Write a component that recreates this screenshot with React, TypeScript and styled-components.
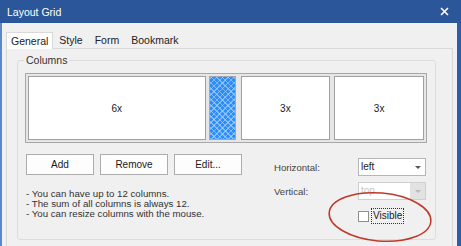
import styled, { createGlobalStyle, css } from "styled-components";

const GlobalStyle = createGlobalStyle`
  html, body {
    margin: 0;
    padding: 0;
    background: #f0f0f0;
  }
  body {
    font-family: "Liberation Sans", Arial, sans-serif;
    color: #1a1a1a;
  }
`;

const Window = styled.div`
  position: relative;
  width: 461px;
  height: 246px;
  display: flex;
  flex-direction: column;
  overflow: hidden;
`;

const TitleBar = styled.div`
  height: 23px;
  flex: none;
  background: #2b579a;
  color: #fff;
  display: flex;
  align-items: center;
  justify-content: space-between;
  padding: 0 12px 0 7px;
  font-size: 10.5px;
`;

const CloseIcon = styled.svg`
  width: 9px;
  height: 9px;
`;

const Body = styled.div`
  flex: 1;
  min-height: 0;
  background: #f0f0f0;
  border-left: 2px solid #5a88cc;
  border-right: 4px solid #2b5fac;
  padding: 9px 4px 0 4px;
`;

const TabStrip = styled.div`
  display: flex;
  align-items: flex-end;
  height: 16px;
  position: relative;
  z-index: 1;
`;

const Tab = styled.div<{ $active?: boolean }>`
  box-sizing: border-box;
  height: 14px;
  padding: 0 6px;
  font-size: 10.5px;
  line-height: 13px;
  color: #222;
  ${(p) =>
    p.$active &&
    css`
      height: 17px;
      margin-bottom: -1px;
      padding: 1px 4px 0;
      background: #fff;
      border: 1px solid #d9d9d9;
      border-bottom: none;
      line-height: 14px;
    `}
`;

const Panel = styled.div`
  border: 1px solid #d9d9d9;
  background: #f0f0f0;
  padding: 5px 16px 30px 10px;
`;

const Group = styled.fieldset`
  margin: 0;
  padding: 0 8px 15px 7px;
  border: 1px solid #dcdcdc;
  border-radius: 3px;
  min-width: 0;
`;

const Legend = styled.legend`
  padding: 0 2px;
  margin-left: -1px;
  font-size: 10.5px;
  line-height: 12px;
  color: #333;
`;

const Strip = styled.div`
  margin-top: 7px;
  display: flex;
  height: 64px;
  padding: 2px;
  border: 1px solid #a9a9a9;
  background: #e6e6e6;
`;

const Cell = styled.div<{ $span: number }>`
  flex: ${(p) => p.$span} 1 0;
  min-width: 0;
  box-sizing: border-box;
  background: #fff;
  border: 1px solid #a0a0a0;
  display: flex;
  align-items: center;
  justify-content: center;
  font-size: 10px;
  & + & {
    margin-left: 4px;
  }
`;

const Splitter = styled.div`
  flex: none;
  width: 27px;
  margin: 0 5px 0 3px;
  box-sizing: border-box;
  border: 1px solid #9aa8b8;
  background-color: #2e8ef8;
  background-image: repeating-linear-gradient(
      45deg,
      rgba(190, 220, 255, 0.55) 0 1px,
      transparent 1px 4px
    ),
    repeating-linear-gradient(
      -45deg,
      rgba(190, 220, 255, 0.55) 0 1px,
      transparent 1px 4px
    );
`;

const Lower = styled.div`
  display: grid;
  grid-template-columns: 249px 1fr;
  margin-top: 11px;
`;

const LeftCol = styled.div`
  padding-left: 1px;
`;

const ButtonRow = styled.div`
  display: flex;
  gap: 6px;
`;

const Button = styled.button`
  width: 68px;
  height: 21px;
  padding: 0;
  background: #fdfdfd;
  border: 1px solid #adadad;
  font-family: inherit;
  font-size: 10px;
  color: #1a1a1a;
`;

const Notes = styled.div`
  margin-top: 14px;
  font-size: 9.7px;
  line-height: 10px;
  color: #333;
`;

const Fields = styled.div`
  margin-top: 4px;
  display: grid;
  grid-template-columns: 84px 68px;
  grid-auto-rows: 18px;
  row-gap: 6px;
  align-items: center;
  font-size: 9.6px;
  color: #444;
`;

const Combo = styled.div<{ $disabled?: boolean }>`
  box-sizing: border-box;
  height: 18px;
  display: flex;
  align-items: stretch;
  background: #fff;
  border: 1px solid ${(p) => (p.$disabled ? "#cfcfcf" : "#b5b5b5")};
  color: ${(p) => (p.$disabled ? "#c6c6c6" : "#1a1a1a")};
  font-size: 10px;
`;

const ComboText = styled.span`
  flex: 1;
  padding-left: 2px;
  line-height: 16px;
`;

const ComboArrow = styled.span<{ $disabled?: boolean }>`
  width: 15px;
  display: flex;
  align-items: center;
  justify-content: center;
  background: ${(p) => (p.$disabled ? "#e2e2e2" : "transparent")};
  &::after {
    content: "";
    border-left: 3px solid transparent;
    border-right: 3px solid transparent;
    border-top: 3px solid ${(p) => (p.$disabled ? "#b8b8b8" : "#555")};
  }
`;

const CheckRow = styled.div`
  grid-column: 2;
  display: flex;
  align-items: center;
  gap: 2px;
  margin-top: 2px;
`;

const Box = styled.span`
  width: 11px;
  height: 11px;
  box-sizing: border-box;
  background: #fff;
  border: 1px solid #8f8f8f;
`;

const CheckLabel = styled.span`
  padding: 1px 1px 2px;
  border: 1px dotted #333;
  font-size: 10px;
  color: #222;
`;

const Mark = styled.svg`
  position: absolute;
  left: 326px;
  top: 190px;
  width: 108px;
  height: 54px;
  pointer-events: none;
`;

export default function App() {
  return (
    <>
      <GlobalStyle />
      <Window>
        <TitleBar>
          <span>Layout Grid</span>
          <CloseIcon viewBox="0 0 9 9">
            <path d="M1 1L8 8M8 1L1 8" stroke="#fff" strokeWidth="1.6" />
          </CloseIcon>
        </TitleBar>
        <Body>
          <TabStrip>
            <Tab $active>General</Tab>
            <Tab>Style</Tab>
            <Tab>Form</Tab>
            <Tab>Bookmark</Tab>
          </TabStrip>
          <Panel>
            <Group>
              <Legend>Columns</Legend>
              <Strip>
                <Cell $span={6}>6x</Cell>
                <Splitter />
                <Cell $span={3}>3x</Cell>
                <Cell $span={3}>3x</Cell>
              </Strip>
              <Lower>
                <LeftCol>
                  <ButtonRow>
                    <Button>Add</Button>
                    <Button>Remove</Button>
                    <Button>Edit...</Button>
                  </ButtonRow>
                  <Notes>
                    <div>- You can have up to 12 columns.</div>
                    <div>- The sum of all columns is always 12.</div>
                    <div>- You can resize columns with the mouse.</div>
                  </Notes>
                </LeftCol>
                <Fields>
                  <span>Horizontal:</span>
                  <Combo>
                    <ComboText>left</ComboText>
                    <ComboArrow />
                  </Combo>
                  <span>Vertical:</span>
                  <Combo $disabled>
                    <ComboText>top</ComboText>
                    <ComboArrow $disabled />
                  </Combo>
                  <CheckRow>
                    <Box />
                    <CheckLabel>Visible</CheckLabel>
                  </CheckRow>
                </Fields>
              </Lower>
            </Group>
          </Panel>
        </Body>
        <Mark viewBox="0 0 108 54">
          <ellipse
            cx="54"
            cy="27"
            rx="51"
            ry="24"
            transform="rotate(5 54 27)"
            fill="none"
            stroke="#c0392b"
            strokeWidth="1.5"
          />
        </Mark>
      </Window>
    </>
  );
}
